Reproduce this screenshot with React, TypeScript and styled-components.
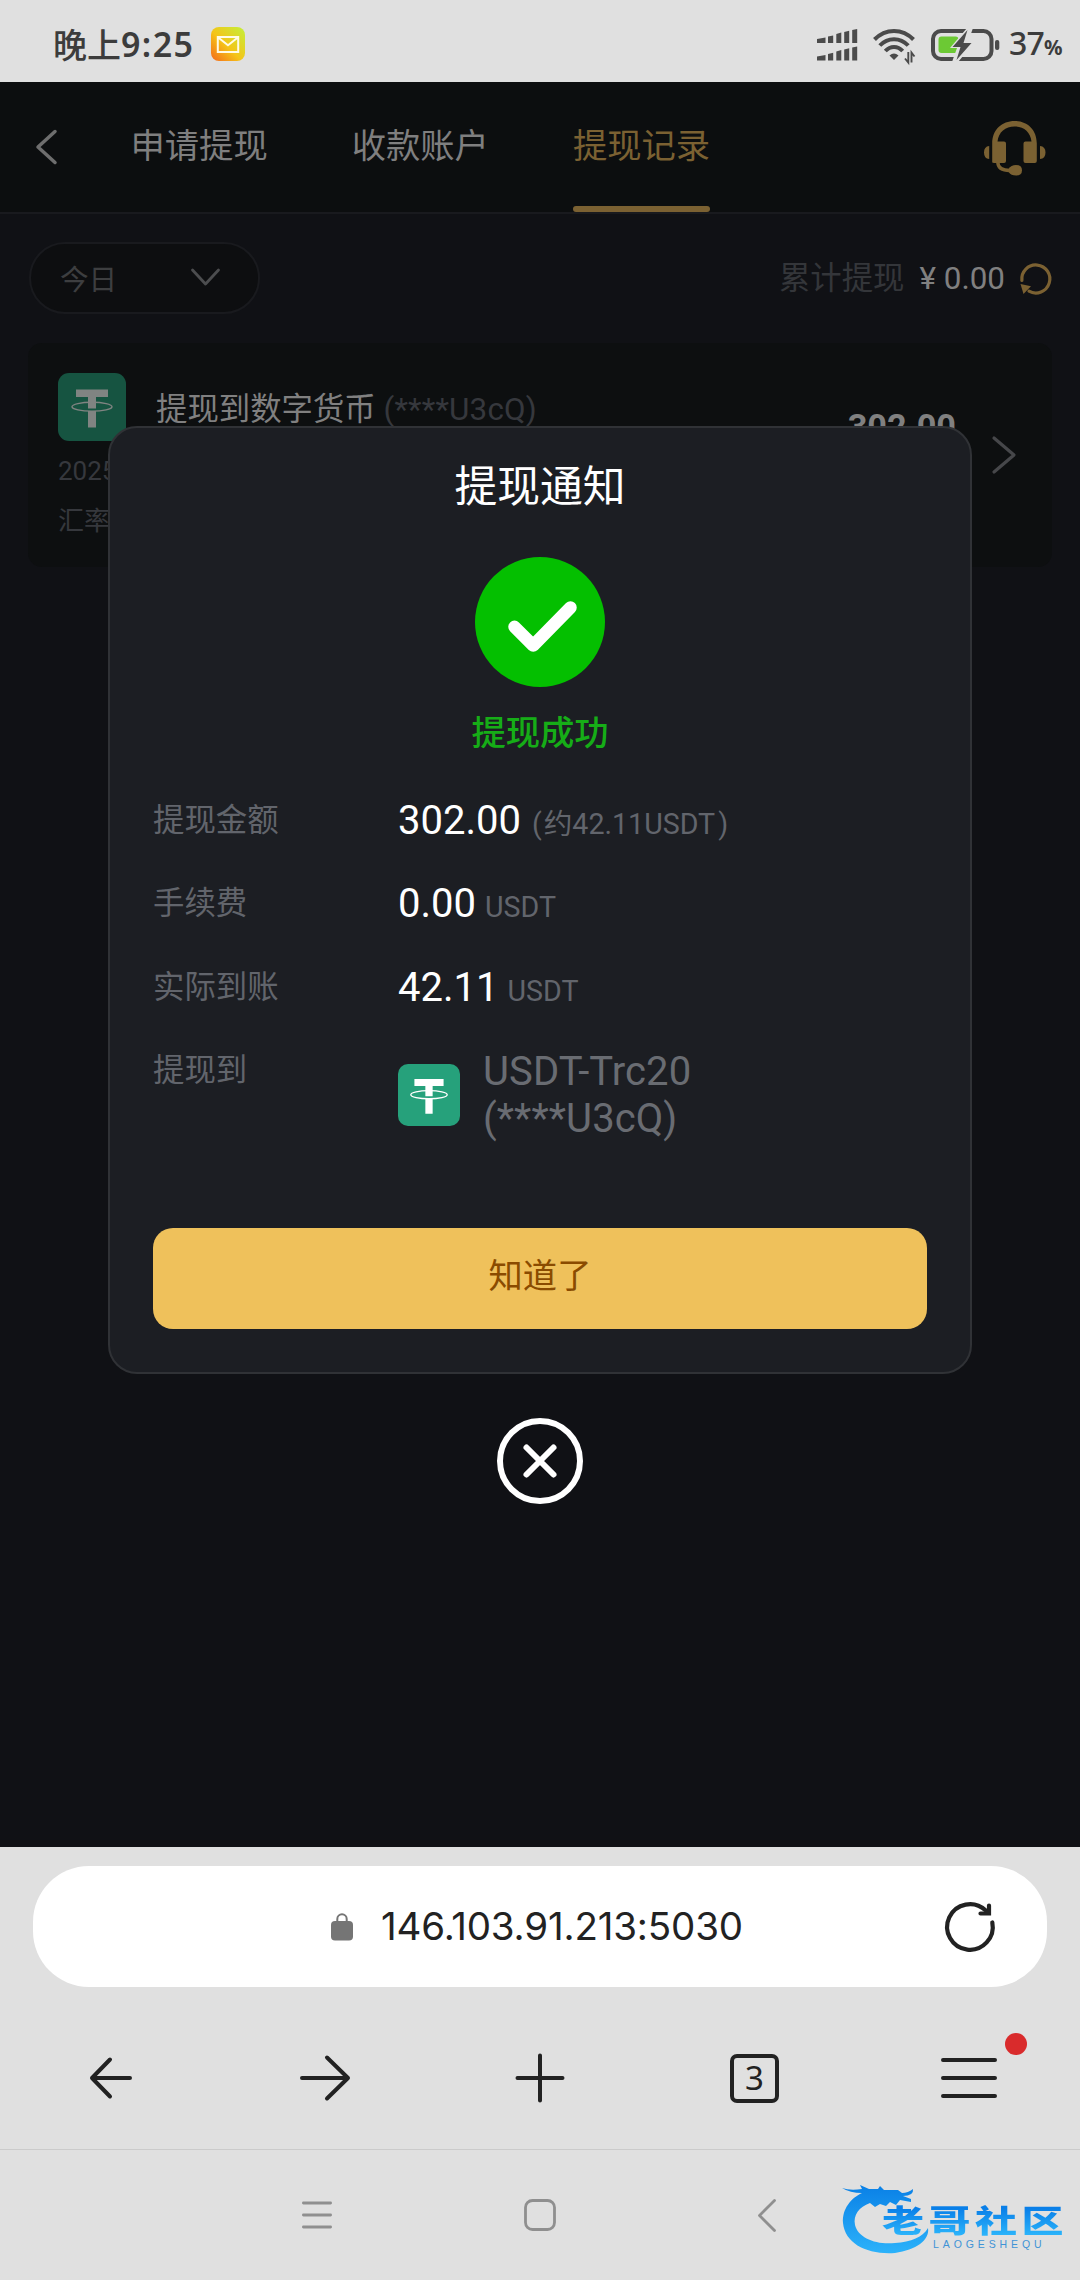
import React from 'react';
import styled, { createGlobalStyle } from 'styled-components';

const GlobalStyle = createGlobalStyle`
  *, *::before, *::after { box-sizing: border-box; }
  body { margin: 0; background: #101115; }
  svg { display: block; flex: none; overflow: visible; }
  button { border: 0; padding: 0; margin: 0; background: none; font: inherit; color: inherit; }
`;

const Phone = styled.div`
  width: 1080px;
  height: 2280px;
  display: flex;
  flex-direction: column;
  overflow: hidden;
  background: #e0e0e0;
  font-family: Roboto, 'Noto Sans CJK SC', sans-serif;
`;

/* ---------- status bar ---------- */

const StatusBar = styled.header`
  height: 82px;
  flex: none;
  display: flex;
  align-items: center;
  padding: 8px 18px 0 53px;
  color: #3c3c3c;
`;

const Clock = styled.div`
  font: 500 34px/40px 'Noto Sans CJK SC', sans-serif;
  display: flex;
  align-items: center;
  width: 158px;
  padding-bottom: 2px;
`;

const ClockDigits = styled.span`
  font: 600 34px/40px 'Noto Sans', sans-serif;
  letter-spacing: 1.4px;
`;

const StatusIcons = styled.div`
  margin-left: auto;
  display: flex;
  align-items: center;
  gap: 16px;
`;

const BatteryLevel = styled.div`
  display: flex;
  align-items: baseline;
  font: 500 32px/36px 'Noto Sans', sans-serif;
  letter-spacing: -0.8px;
  margin-left: -7px;
  width: 53px;
`;

const Percent = styled.span`
  font-size: 20.5px;
  font-weight: 700;
`;

/* ---------- web page ---------- */

const Page = styled.main`
  position: relative;
  height: 1765px;
  flex: none;
  background: #101115;
`;

const TopBar = styled.nav`
  height: 132px;
  display: flex;
  align-items: stretch;
  padding: 0 34px 0 35px;
  background: #0c0e0f;
  border-bottom: 2px solid #191a1e;
`;

const BackButton = styled.button`
  width: 95.5px;
  display: flex;
  align-items: center;
`;

const Tabs = styled.div`
  display: flex;
  gap: 84px;
`;

const Tab = styled.button<{ $active?: boolean }>`
  display: flex;
  flex-direction: column;
  align-items: center;
  justify-content: space-between;
  padding-top: 39px;
  font-size: 34.3px;
  line-height: 50px;
  color: ${(p) => (p.$active ? '#7b6132' : '#7f7f7f')};

  &::after {
    content: '';
    width: 100%;
    height: 6px;
    border-radius: 3px;
    background: ${(p) => (p.$active ? '#7b6132' : 'transparent')};
  }
`;

const Support = styled.button`
  margin-left: auto;
  align-self: flex-start;
  padding-top: 39px;
`;

const FilterBar = styled.div`
  display: flex;
  align-items: center;
  justify-content: space-between;
  padding: 28px 28px 0 29px;
`;

const DateSelect = styled.button`
  width: 231px;
  height: 72px;
  border: 2px solid #191a1e;
  border-radius: 36px;
  background: #0d0e10;
  display: flex;
  align-items: center;
  justify-content: space-between;
  padding: 0 38px 2px 29px;
  font-size: 28.6px;
  color: #3d3e40;
`;

const Total = styled.div`
  display: flex;
  align-items: center;
  font-size: 31.4px;
  line-height: 40px;
  padding-top: 2px;
  color: #34363a;
`;

const TotalAmount = styled.span`
  margin: 0 15px 0 15px;
  color: #808080;
`;

const RecordCard = styled.section`
  margin: 29px 28px 0;
  height: 224px;
  border-radius: 14px;
  background: #0d0f10;
  display: flex;
  align-items: center;
  justify-content: space-between;
  padding: 0 36px 0 30px;
`;

const RecordInfo = styled.div`
  align-self: stretch;
  display: flex;
  flex-direction: column;
  padding-top: 30px;
`;

const RecordTitle = styled.div`
  display: flex;
  height: 68px;
  gap: 30px;
  font-size: 31.4px;
  line-height: 73px;
  color: #808080;
`;

const Masked = styled.span`
  color: #36383d;
  letter-spacing: 0.15px;
`;

const RecordMetas = styled.div`
  padding-top: 5px;
`;

const RecordMeta = styled.div`
  font-size: 26px;
  line-height: 50px;
  color: #36383d;
`;

const RecordRight = styled.div`
  display: flex;
  align-items: center;
  gap: 36px;
`;

const RecordAmount = styled.div`
  font-size: 34.3px;
  font-weight: 700;
  line-height: 40px;
  padding-bottom: 56px;
  color: #808080;
`;

/* ---------- dialog ---------- */

const Overlay = styled.div`
  position: absolute;
  inset: 0;
  display: flex;
  flex-direction: column;
  align-items: center;
  padding-top: 344px;
`;

const Dialog = styled.section`
  width: 864px;
  height: 948px;
  border: 2px solid #303236;
  border-radius: 29px;
  background: #1c1e23;
  display: flex;
  flex-direction: column;
  align-items: center;
  padding: 29px 43px 0;
`;

const DialogTitle = styled.h1`
  margin: 0;
  font-size: 42.8px;
  font-weight: 400;
  line-height: 60px;
  color: #fff;
`;

const ResultIcon = styled.div`
  margin-top: 40px;
`;

const ResultText = styled.div`
  margin-top: 21px;
  font-size: 34.3px;
  font-weight: 500;
  line-height: 50px;
  color: #16ad17;
`;

const Details = styled.dl`
  margin: 33px 0 0;
  align-self: stretch;
  display: flex;
  flex-direction: column;
  gap: 23.4px;
`;

const DetailRow = styled.div`
  display: flex;
  min-height: 60px;
`;

const DetailLabel = styled.dt`
  width: 245px;
  flex: none;
  font-size: 31.4px;
  line-height: 60px;
  color: #62656c;
`;

const DetailValue = styled.dd`
  margin: 0;
  display: flex;
  align-items: baseline;
  font-size: 40px;
  line-height: 60px;
  color: #fff;
`;

const Unit = styled.span`
  margin-left: 9px;
  font-size: 28.6px;
  line-height: 40px;
  color: #62656c;
`;

const OpenParen = styled.span`
  margin: 0 2px;
`;

const CloseParen = styled.span`
  margin-left: 3px;
`;

const Wallet = styled.dd`
  margin: 7px 0 0;
  display: flex;
  align-items: center;
  gap: 23px;
  font-size: 40px;
  line-height: 47px;
  letter-spacing: 0.1px;
  color: #696c72;
`;

const ConfirmButton = styled.button`
  margin-top: 86px;
  width: 774px;
  height: 101px;
  flex: none;
  border-radius: 20px;
  background: #efc15b;
  color: #8a4b00;
  font-size: 34.3px;
  line-height: 97px;
  padding-bottom: 4px;
`;

const CloseButton = styled.button`
  margin-top: 44px;
`;

/* ---------- browser chrome ---------- */

const AddressBar = styled.div`
  margin: 19px 33px 0;
  height: 121px;
  flex: none;
  border-radius: 56px;
  background: #fff;
  display: flex;
  align-items: center;
  padding: 0 51px 0 298px;
`;

const Address = styled.span`
  margin: 0 0 2px 28px;
  font: 400 38.5px/50px Inter, sans-serif;
  letter-spacing: -0.16px;
  color: #222;
`;

const Reload = styled.button`
  margin-left: auto;
`;

const Toolbar = styled.nav`
  height: 163px;
  flex: none;
  padding-top: 20px;
  display: grid;
  grid-template-columns: 222px 206px 223px 207px 222px;
  align-items: center;
  justify-items: center;
  border-bottom: 1.5px solid #cbcbcb;
`;

const TabCount = styled.button`
  width: 49px;
  height: 49px;
  border: 4px solid #222;
  border-radius: 7px;
  display: flex;
  align-items: center;
  justify-content: center;
  font: 400 33px/40px 'Noto Sans', sans-serif;
  color: #222;
`;

const MenuButton = styled.button`
  position: relative;
`;

const Dot = styled.span`
  position: absolute;
  right: -30px;
  top: -24px;
  width: 22px;
  height: 22px;
  border-radius: 50%;
  background: #d92b2c;
`;

const SystemNav = styled.footer`
  flex: 1;
  display: flex;
  align-items: flex-start;
  padding: 35px 17px 0 302px;
`;

const SystemKey = styled.button<{ $width: number }>`
  width: ${(p) => p.$width}px;
  padding-top: 14px;
`;

const Brand = styled.div`
  display: flex;
  position: relative;
`;

const BrandText = styled.div`
  position: absolute;
  left: 40px;
  top: 22px;
  display: flex;
  flex-direction: column;
`;

const BrandName = styled.div`
  height: 31px;
  font: 900 42px/42px 'Liberation Sans', 'Noto Sans CJK SC', sans-serif;
  letter-spacing: 4.5px;
  white-space: nowrap;
  transform: scaleY(0.72);
  transform-origin: left top;

  span {
    background: linear-gradient(#0a7fe8 10%, #2bb4fb 90%);
    -webkit-background-clip: text;
    color: transparent;
  }
`;

const BrandLatin = styled.div`
  margin-left: 51px;
  font: 400 10.5px/12px 'Liberation Sans', sans-serif;
  letter-spacing: 3.9px;
  color: #3f93d6;
`;

function Tether({ size, fill, ink }: { size: number; fill: string; ink: string }) {
  return (
    <svg width={size} height={size} viewBox="0 0 68 68">
      <rect width="68" height="68" rx="11" fill={fill} />
      <path d="M18 16.5H50V24H38V35.5H30V24H18Z M30 38H38V54.5H30Z" fill={ink} />
      <ellipse cx="34" cy="33.7" rx="20" ry="4.4" fill="none" stroke={ink} strokeWidth="1.4" />
    </svg>
  );
}

function MailBadge() {
  return (
    <svg width="34" height="34" viewBox="0 0 34 34">
      <defs>
        <linearGradient id="mail" x1="0" y1="1" x2="1" y2="0">
          <stop offset="0" stopColor="#f4681c" />
          <stop offset="0.45" stopColor="#f5c418" />
          <stop offset="1" stopColor="#c3f03a" />
        </linearGradient>
      </defs>
      <rect y="-1" width="34" height="34" rx="8" fill="url(#mail)" />
      <path d="M6.800 9H27.200V24H6.800Z M7.500 9.700L17 17.200L26.500 9.700" fill="none" stroke="#fffbe6" strokeWidth="2" />
    </svg>
  );
}

function Signal() {
  const bars = [
    [0, 8.5, 10, 8.5],
    [11, 5.2, 7.6, 6.4],
    [19.3, 5, 5, 3.6],
    [27.2, 5, 3, 1.8],
    [35.2, 5, 1, 0],
  ];
  return (
    <svg width="40" height="32" viewBox="0 0 40 32" fill="#4b4b4b">
      {[0, 17.4].map((y) =>
        bars.map(([x, w, l, r]) => (
          <path key={`${x}-${y}`} d={`M${x} ${y + l}L${x + w} ${y + r}V${y + 14}H${x}Z`} />
        )),
      )}
    </svg>
  );
}

function Wifi() {
  return (
    <svg width="42" height="33" viewBox="0 0 42 33" fill="none" stroke="#4b4b4b">
      <path d="M1.500 10.500C12.500 -1 29.500 -1 40.500 10.500M6.800 16.500C14.800 8 27.200 8 35.200 16.500M12.300 22C17.300 16.600 24.700 16.600 29.700 22" strokeWidth="4" />
      <path d="M16.500 26.500Q21 22.600 25.500 26.500L21 31Z" fill="#4b4b4b" stroke="none" />
      <path d="M35.300 23V33.500L32 29.500M38.500 33.500V23.500L41.500 27.500" strokeWidth="1.900" />
    </svg>
  );
}

function Battery() {
  return (
    <svg width="69" height="32" viewBox="0 0 69 32">
      <rect x="2" y="2" width="58.500" height="28" rx="8" fill="none" stroke="#4b4b4b" strokeWidth="4" />
      <rect x="7.500" y="7.500" width="20" height="16.500" rx="3" fill="#6cc934" />
      <path d="M36 -1L19 19H26L21 33H27L44 13H37L42 -1Z" fill="#e0e0e0" />
      <path d="M36.500 1L21.500 18H29.500L25.500 31L40.500 14H32.500Z" fill="#4b4b4b" />
      <rect x="64" y="11" width="4.300" height="10" rx="2" fill="#4b4b4b" />
    </svg>
  );
}

function Headset() {
  return (
    <svg width="62" height="55" viewBox="0 0 62 55" fill="#7b6132">
      <path d="M8.200 41.500V22.500C8.200 8.500 18 0 30.500 0S52.800 8.500 52.800 22.500V40Q52.800 42 50.800 42H41.500Q39.500 42 39.500 40V22.500Q39.500 20.500 41.500 20.500H47.500C46.500 11 39.500 5.500 30.500 5.500S14.500 11 13.500 20.500H20Q22 20.500 22 22.500V40Q22 42 20 42H10Z" />
      <path d="M5.200 25Q0 25.500 0 31.500T5.200 38ZM56 25Q61.500 25.500 61.500 31.500T56 38Z" />
      <path d="M13.800 41C13.800 47 18 49.500 26 49.500" fill="none" stroke="#7b6132" strokeWidth="3.400" />
      <path d="M24.500 48Q27 44 32 44Q38 44 38 49.300Q38 54.500 32 54.500Q27 54.500 24.500 51Z" />
    </svg>
  );
}

const details = [
  { label: '提现金额', value: '302.00', unit: '约42.11USDT', paren: true },
  { label: '手续费', value: '0.00', unit: 'USDT' },
  { label: '实际到账', value: '42.11', unit: 'USDT' },
];

export default function App() {
  return (
    <Phone>
      <GlobalStyle />
      <StatusBar>
        <Clock>
          晚上<ClockDigits>9:25</ClockDigits>
        </Clock>
        <MailBadge />
        <StatusIcons>
          <Signal />
          <Wifi />
          <Battery />
          <BatteryLevel>
            37<Percent>%</Percent>
          </BatteryLevel>
        </StatusIcons>
      </StatusBar>

      <Page>
        <TopBar>
          <BackButton>
            <svg width="22" height="36" viewBox="0 0 22 36" fill="none" stroke="#6e6e6e" strokeWidth="3.500" strokeLinecap="round" strokeLinejoin="round">
              <path d="M20 2.500L3 18L20 33.500" />
            </svg>
          </BackButton>
          <Tabs>
            <Tab>申请提现</Tab>
            <Tab>收款账户</Tab>
            <Tab $active>提现记录</Tab>
          </Tabs>
          <Support>
            <Headset />
          </Support>
        </TopBar>

        <FilterBar>
          <DateSelect>
            今日
            <svg width="29" height="18" viewBox="0 0 29 18" fill="none" stroke="#4c4d4f" strokeWidth="2.800" strokeLinecap="round" strokeLinejoin="round">
              <path d="M1.500 2L14.500 16L27.500 2" />
            </svg>
          </DateSelect>
          <Total>
            累计提现
            <TotalAmount>¥ 0.00</TotalAmount>
            <svg width="32" height="32" viewBox="0 0 32 32" fill="none" stroke="#7b6132" strokeWidth="3.200">
              <path d="M1.900 17.500A14 14 0 1 1 9 28.200" strokeLinecap="round" />
              <path d="M0.500 21L11 23.300L3.500 31Z" fill="#7b6132" stroke="none" />
            </svg>
          </Total>
        </FilterBar>

        <RecordCard>
          <RecordInfo>
            <RecordTitle>
              <Tether size={68} fill="#165441" ink="#808482" />
              <div>
                提现到数字货币 <Masked>(****U3cQ)</Masked>
              </div>
            </RecordTitle>
            <RecordMetas>
              <RecordMeta>2025</RecordMeta>
              <RecordMeta>汇率</RecordMeta>
            </RecordMetas>
          </RecordInfo>
          <RecordRight>
            <RecordAmount>302.00</RecordAmount>
            <svg width="24" height="38" viewBox="0 0 24 38" fill="none" stroke="#46474a" strokeWidth="3.200" strokeLinecap="round" strokeLinejoin="round">
              <path d="M2 2L22 19L2 36" />
            </svg>
          </RecordRight>
        </RecordCard>

        <Overlay>
          <Dialog>
            <DialogTitle>提现通知</DialogTitle>
            <ResultIcon>
              <svg width="130" height="130" viewBox="0 0 130 130">
                <circle cx="65" cy="65" r="65" fill="#04bf00" />
                <path d="M39.500 69.800L58.200 88.500L95.500 50.500" fill="none" stroke="#fff" strokeWidth="12.500" strokeLinecap="round" strokeLinejoin="round" />
              </svg>
            </ResultIcon>
            <ResultText>提现成功</ResultText>
            <Details>
              {details.map((d) => (
                <DetailRow key={d.label}>
                  <DetailLabel>{d.label}</DetailLabel>
                  <DetailValue>
                    {d.value}
                    <Unit>
                      {d.paren && <OpenParen>(</OpenParen>}
                      {d.unit}
                      {d.paren && <CloseParen>)</CloseParen>}
                    </Unit>
                  </DetailValue>
                </DetailRow>
              ))}
              <DetailRow>
                <DetailLabel>提现到</DetailLabel>
                <Wallet>
                  <Tether size={62} fill="#26a17b" ink="#ffffff" />
                  <div>
                    USDT-Trc20
                    <br />
                    (****U3cQ)
                  </div>
                </Wallet>
              </DetailRow>
            </Details>
            <ConfirmButton>知道了</ConfirmButton>
          </Dialog>
          <CloseButton>
            <svg width="86" height="86" viewBox="0 0 86 86" fill="none" stroke="#fff" strokeWidth="6" strokeLinecap="round">
              <circle cx="43" cy="43" r="40" />
              <path d="M29.500 29.500L56.500 56.500M56.500 29.500L29.500 56.500" />
            </svg>
          </CloseButton>
        </Overlay>
      </Page>

      <AddressBar>
        <svg width="22" height="28" viewBox="0 0 22 28">
          <path d="M6.300 10V6A4.700 4.700 0 0 1 15.700 6V10" fill="none" stroke="#757575" strokeWidth="2" />
          <rect y="8" width="22" height="19.500" rx="4" fill="#757575" />
        </svg>
        <Address>146.103.91.213:5030</Address>
        <Reload>
          <svg width="52" height="52" viewBox="0 0 52 52" fill="none" stroke="#222" strokeWidth="4.200" strokeLinecap="round">
            <path d="M48.300 21.500A22.800 22.800 0 1 1 41.500 9.300" />
            <path d="M45 4.500V12.500H36.500" />
          </svg>
        </Reload>
      </AddressBar>

      <Toolbar>
        <button>
          <svg width="42" height="42" viewBox="0 0 42 42" fill="none" stroke="#222" strokeWidth="4" strokeLinecap="round" strokeLinejoin="round">
            <path d="M40 21H2M20 2.500L2 21L20 39.500" />
          </svg>
        </button>
        <button>
          <svg width="50" height="46" viewBox="0 0 50 46" fill="none" stroke="#222" strokeWidth="4" strokeLinecap="round" strokeLinejoin="round">
            <path d="M2 23H48M27 2.500L48 23L27 43.500" />
          </svg>
        </button>
        <button>
          <svg width="50" height="50" viewBox="0 0 50 50" fill="none" stroke="#222" strokeWidth="4" strokeLinecap="round">
            <path d="M2.500 25H47.500M25 2.500V47.500" />
          </svg>
        </button>
        <TabCount>3</TabCount>
        <MenuButton>
          <svg width="56" height="42" viewBox="0 0 56 42" fill="none" stroke="#222" strokeWidth="4" strokeLinecap="round">
            <path d="M2 3H54M2 21H54M2 39H54" />
          </svg>
          <Dot />
        </MenuButton>
      </Toolbar>

      <SystemNav>
        <SystemKey $width={222}>
          <svg width="30" height="32" viewBox="0 0 30 32" fill="none" stroke="#8f8f8f" strokeWidth="2.800" strokeLinecap="round">
            <path d="M1.400 4H28.600M1.400 16H28.600M1.400 28H28.600" />
          </svg>
        </SystemKey>
        <SystemKey $width={234}>
          <svg width="32" height="32" viewBox="0 0 32 32" fill="none" stroke="#8f8f8f" strokeWidth="2.800">
            <rect x="1.500" y="1.500" width="29" height="29" rx="7" />
          </svg>
        </SystemKey>
        <SystemKey $width={84}>
          <svg width="18" height="34" viewBox="0 0 18 34" fill="none" stroke="#8f8f8f" strokeWidth="2.800" strokeLinecap="round" strokeLinejoin="round">
            <path d="M16.500 1.500L1.500 16.500L16.500 31.500" />
          </svg>
        </SystemKey>
        <Brand>
          <svg width="90" height="70" viewBox="0 0 90 70">
            <defs>
              <linearGradient id="dragon" x1="0" y1="0" x2="0" y2="1">
                <stop offset="0" stopColor="#0a80e6" />
                <stop offset="1" stopColor="#2cb2fa" />
              </linearGradient>
            </defs>
            <path
              fill="url(#dragon)"
              d="M0 3Q8 6 20 4L18 0L27 4L36 4L38 1L42 5L47 5L56 5L60 8Q66 8 71 4Q72 11 61 11L69 14V17L58 15L54 20L48 17L44 21L38 19L33 22L28 18C17 22 11 30 13 40C16 53 34 60 53 58C69 57 81 52 86 43C88 55 74 65 53 68C26 70 3 59 1 38C0 24 9 13 20 8Q8 8 0 3Z"
            />
          </svg>
          <BrandText>
            <BrandName>
              <span>老哥社区</span>
            </BrandName>
            <BrandLatin>LAOGESHEQU</BrandLatin>
          </BrandText>
        </Brand>
      </SystemNav>
    </Phone>
  );
}
